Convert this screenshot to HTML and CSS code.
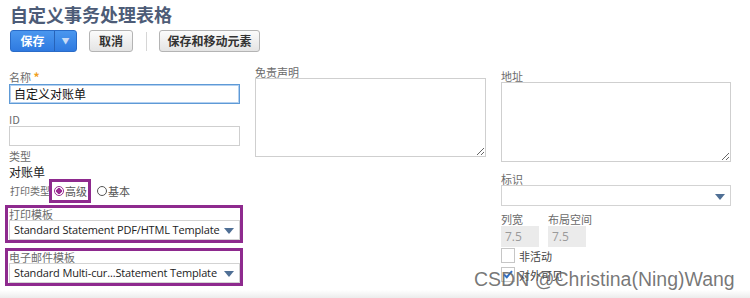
FILE: index.html
```html
<!DOCTYPE html>
<html lang="zh">
<head>
<meta charset="utf-8">
<link rel="stylesheet" href="styles.css">
</head>
<body>
<div class="page">
  <h1 class="title">自定义事务处理表格</h1>
  <div class="toolbar">
    <div class="btn-split"><span class="btn-main">保存</span><span class="btn-arrow">▼</span></div>
    <button class="btn btn-cancel">取消</button>
    <span class="sep"></span>
    <button class="btn btn-move">保存和移动元素</button>
  </div>
  <div class="form">
    <div class="col col1">
      <div class="field">
        <div class="label">名称 <span class="req">*</span></div>
        <div class="input focused">自定义对账单</div>
      </div>
      <div class="field f-id">
        <div class="label">ID</div>
        <div class="input"></div>
      </div>
      <div class="field f-type">
        <div class="label short">类型</div>
        <div class="value">对账单</div>
      </div>
      <div class="radio-row">
        <span class="label inline">打印类型</span>
        <span class="hl-box"><span class="radio on"></span>高级</span>
        <span class="radio-opt"><span class="radio"></span>基本</span>
      </div>
      <div class="hl-field">
        <div class="label">打印模板</div>
        <div class="select">Standard Statement PDF/HTML Template<span class="caret"></span></div>
      </div>
      <div class="hl-field second">
        <div class="label">电子邮件模板</div>
        <div class="select">Standard Multi-cur...Statement Template<span class="caret"></span></div>
      </div>
    </div>
    <div class="col col2">
      <div class="label tight">免责声明</div>
      <textarea class="area"></textarea>
    </div>
    <div class="col col3">
      <div class="label tight">地址</div>
      <textarea class="area addr"></textarea>
      <div class="label tight f-mark">标识</div>
      <div class="select sel3"><span class="caret"></span></div>
      <div class="pair">
        <div class="mini">
          <div class="label">列宽</div>
          <div class="ro">7.5</div>
        </div>
        <div class="mini">
          <div class="label">布局空间</div>
          <div class="ro">7.5</div>
        </div>
      </div>
      <div class="check-row"><span class="cb"></span><span class="cb-text">非活动</span></div>
      <div class="check-row second"><span class="cb checked"><svg width="10" height="9" viewBox="0 0 10 9"><path d="M1 4.5 L3.8 7.2 L9 1.2" fill="none" stroke="#2f6fc4" stroke-width="2"/></svg></span><span class="cb-text">对外可见</span></div>
    </div>
  </div>
  <div class="watermark">CSDN @Christina(Ning)Wang</div>
</div>
</body>
</html>
```
FILE: styles.css
```css
html, body { margin: 0; padding: 0; }
body {
  width: 750px;
  height: 298px;
  overflow: hidden;
  background: linear-gradient(to bottom, #ffffff 0, #ffffff 290px, #ececec 298px);
  font-family: "Noto Sans CJK SC", "Open Sans", sans-serif;
  color: #222;
}
.page { position: relative; padding-left: 9px; height: 298px; }
.title {
  margin: 0;
  padding-top: 2px;
  font-size: 18px;
  line-height: 24px;
  font-weight: 700;
  color: #4d5c77;
  padding-left: 1px;
}
.toolbar {
  margin-top: 4px;
  margin-left: 1px;
  display: flex;
  align-items: center;
  height: 22px;
}
.btn-split {
  display: flex;
  height: 22px;
  border-radius: 3px;
  border: 1px solid #2a6cc8;
  box-sizing: border-box;
  background: linear-gradient(to bottom, #4a97ef, #2f7ae0);
  overflow: hidden;
}
.btn-main {
  width: 43px;
  color: #fff;
  font-size: 12px;
  font-weight: 700;
  line-height: 20px;
  text-align: center;
  border-right: 1px solid #2763b8;
}
.btn-arrow {
  width: 21px;
  color: #c9dcf6;
  font-size: 8px;
  line-height: 20px;
  text-align: center;
}
.btn {
  height: 22px;
  box-sizing: border-box;
  border: 1px solid #b4b4b4;
  border-radius: 3px;
  background: linear-gradient(to bottom, #fbfbfb, #e4e4e4);
  font-family: "Noto Sans CJK SC", sans-serif;
  font-size: 12px;
  font-weight: 700;
  color: #333;
  padding: 0;
  line-height: 20px;
}
.btn-cancel { margin-left: 12px; width: 44px; }
.sep { margin-left: 13px; width: 1px; height: 19px; background: #d6d6d6; }
.btn-move { margin-left: 12px; width: 101px; }

.form {
  display: grid;
  grid-template-columns: 231px 231px 230px;
  column-gap: 15px;
  align-items: start;
}
.col1 { padding-top: 18px; }
.col2 { padding-top: 14px; }
.col3 { padding-top: 19px; }

.label {
  font-size: 11px;
  line-height: 14px;
  color: #6b6b6b;
}
.label.tight { line-height: 12px; }
.label.short { line-height: 13px; }
.col3 .label.tight { line-height: 11px; }
.req { color: #f0a020; font-weight: 700; font-size: 12px; }
.input {
  height: 20px;
  box-sizing: border-box;
  border: 1px solid #cfcfcf;
  font-size: 12px;
  line-height: 18px;
  padding-left: 4px;
  color: #111;
}
.input.focused {
  border: 1px solid #5e9ad6;
  box-shadow: inset 0 0 0 1px #b3d0f0;
}
.f-id { margin-top: 8px; }
.f-type { margin-top: 4px; }
.value { font-size: 12px; line-height: 14px; margin-top: 2px; color: #222; }

.radio-row {
  display: flex;
  align-items: center;
  height: 24px;
  margin-top: 0;
}
.label.inline { font-size: 10px; line-height: 14px; margin-left: 1px; margin-right: -1px; }
.hl-box {
  display: flex;
  align-items: center;
  box-sizing: border-box;
  height: 24px;
  width: 42px;
  border: 3px solid #8e2a8e;
  padding-left: 2px;
  font-size: 11px;
  color: #555;
}
.radio {
  display: inline-block;
  width: 10px;
  height: 10px;
  box-sizing: border-box;
  border-radius: 50%;
  border: 1px solid #555;
  background: #fff;
  margin-right: 1px;
}
.radio.on {
  border: 1.5px solid #9a2a92;
  background: radial-gradient(circle, #9a2a92 0, #9a2a92 2.6px, #fff 3px);
}
.radio-opt {
  display: flex;
  align-items: center;
  margin-left: 6px;
  font-size: 11px;
  color: #555;
}

.hl-field {
  margin: 2px -3px 0 -4px;
  border: 3px solid #8e2a8e;
  padding-left: 1px;
}
.hl-field.second { margin-top: 5px; }
.hl-field .label { line-height: 12px; }
.select {
  position: relative;
  height: 20px;
  box-sizing: border-box;
  border: 1px solid #d3d3d3;
  background: #fff;
  font-family: "Open Sans", sans-serif;
  font-size: 11px;
  letter-spacing: -0.15px;
  line-height: 18px;
  padding-left: 4px;
  color: #222;
  white-space: nowrap;
}
.caret {
  position: absolute;
  right: 5px;
  top: 7px;
  width: 0;
  height: 0;
  border-left: 5px solid transparent;
  border-right: 5px solid transparent;
  border-top: 6px solid #4f6f95;
}

.area {
  display: block;
  width: 231px;
  height: 79px;
  box-sizing: border-box;
  border: 1px solid #cfcfcf;
  margin: 0;
  padding: 2px;
  resize: both;
  outline: none;
  background: #fff;
}
.area.addr { width: 230px; height: 80px; }
.f-mark { margin-top: 12px; }
.sel3 { height: 21px; }
.sel3 .caret { top: 8px; }
.pair { display: flex; gap: 9px; margin-top: 6px; }
.mini { width: 38px; }
.mini .label { white-space: nowrap; }
.ro {
  height: 21px;
  background: #ebebeb;
  font-family: "Open Sans", sans-serif;
  font-size: 12px;
  line-height: 21px;
  padding-left: 4px;
  color: #9a9a9a;
}
.check-row {
  display: flex;
  align-items: center;
  margin-top: 1px;
  height: 15px;
}
.check-row.second { margin-top: 4px; }
.cb {
  width: 14px;
  height: 15px;
  box-sizing: border-box;
  border: 1px solid #c6c6c6;
  background: #fff;
  display: flex;
  align-items: center;
  justify-content: center;
}
.cb-text { margin-left: 4px; font-size: 11px; color: #444; }

.watermark {
  position: absolute;
  left: 474px;
  top: 269px;
  font-family: "Liberation Sans", Arial, sans-serif;
  font-size: 19.5px;
  line-height: 20px;
  color: rgba(95, 95, 95, 0.85);
  white-space: nowrap;
}
```
